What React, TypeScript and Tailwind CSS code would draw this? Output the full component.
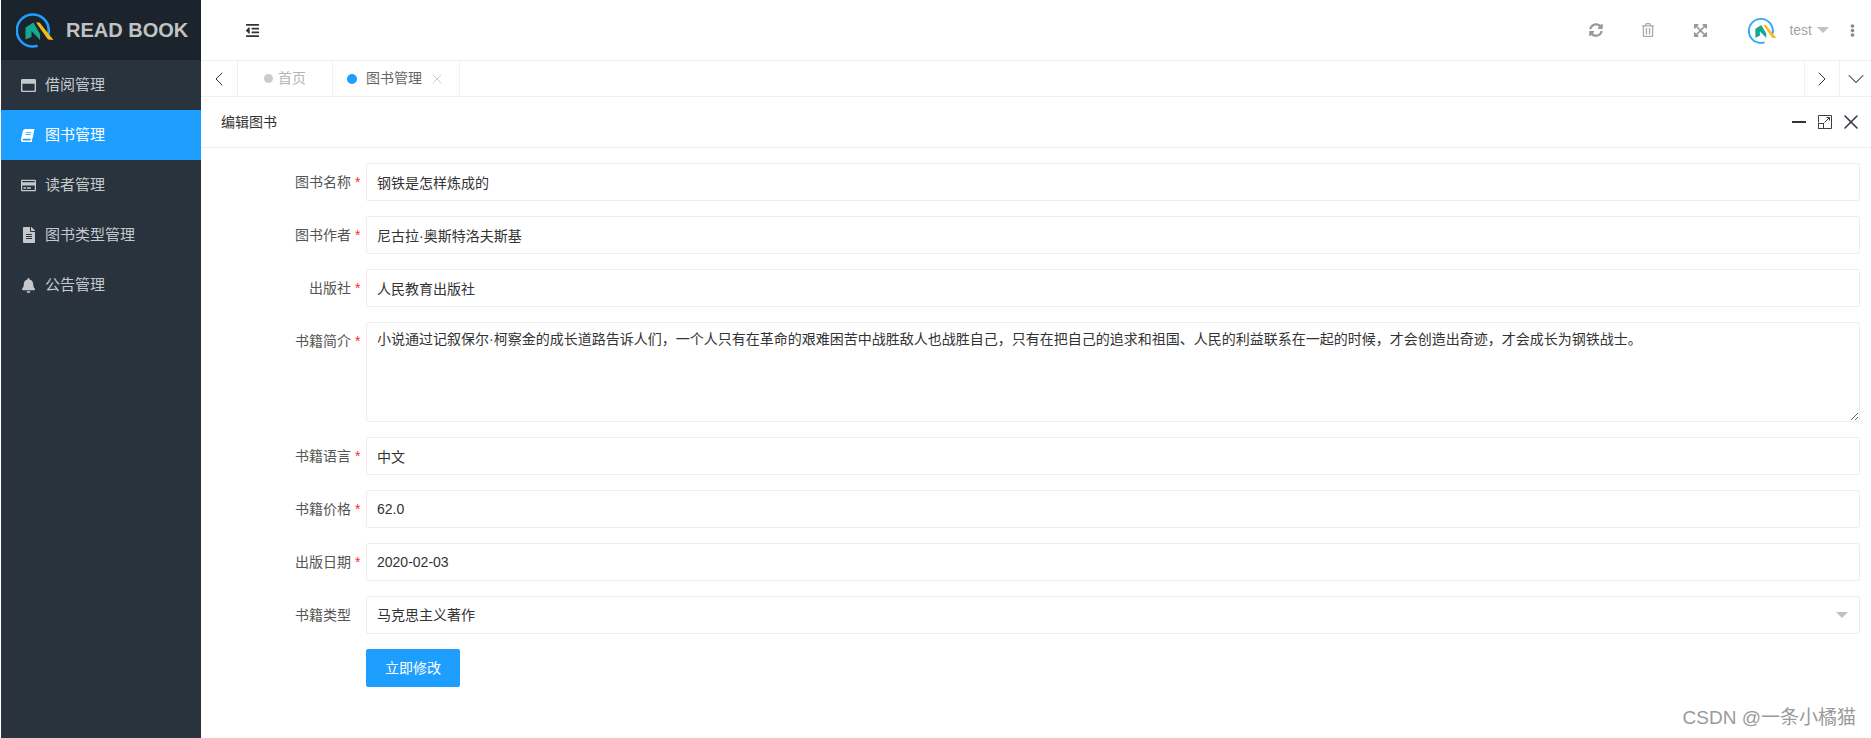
import { FaBell, FaBook, FaEllipsisV, FaExpandArrowsAlt, FaFileAlt, FaOutdent, FaRegCreditCard, FaRegTrashAlt, FaRegWindowMaximize, FaSyncAlt } from "react-icons/fa"
import { ChevronDown, ChevronLeft, ChevronRight, X } from "lucide-react"
import type { ReactNode } from "react"

const cjk = "font-['Liberation_Sans','Noto_Sans_CJK_SC',sans-serif]"

const menuItems = [
  { label: "借阅管理", icon: <FaRegWindowMaximize size={15} /> },
  { label: "图书管理", icon: <FaBook size={13} className="-skew-x-12" />, active: true },
  { label: "读者管理", icon: <FaRegCreditCard size={15} /> },
  { label: "图书类型管理", icon: <FaFileAlt size={16} /> },
  { label: "公告管理", icon: <FaBell size={15} /> },
]

const Logo = ({ className, dark }: { className: string; dark?: boolean }) => (
  <svg viewBox="0 0 38 36" className={className}>
    <circle cx="16.800" cy="18.500" r="16" fill="none" stroke={dark ? "#1e9fff" : "#2ea6ff"} strokeWidth="2.6" strokeDasharray="84.500 16" strokeDashoffset="80.500" />
    <path d="M9.500 27.500V15.500l8-5 6.500 11.500v6l-8.500-9v6z" fill="#14a98f" />
    <path d="M20 10.500h3.500L37.500 28 32 27.500z" fill="#f5b91c" />
  </svg>
)

const Sidebar = () => (
  <aside className="flex w-[200px] shrink-0 flex-col bg-[#28333e]">
    <div className="flex h-[60px] items-center bg-[#1b232c] pl-[15px]">
      <Logo dark className="h-[36px] w-[38px]" />
      <span className="ml-[12px] text-[20px] font-bold text-[#c2c2c2]">READ BOOK</span>
    </div>
    {menuItems.map((item) => (
      <div
        key={item.label}
        className={`flex h-[50px] items-center pl-[20px] text-[15px] ${item.active ? "bg-[#1e9fff] text-white" : "text-[#c5c9cc]"}`}
      >
        <span className="flex w-[24px] justify-start">{item.icon}</span>
        {item.label}
      </div>
    ))}
  </aside>
)

const TopBar = () => (
  <header className="flex h-[60px] items-center bg-white text-[#999]">
    <FaOutdent size={15} className="ml-[44px] text-[#333]" />
    <div className="flex-1" />
    <div className="flex items-center">
      <span className="flex w-[52px] justify-center"><FaSyncAlt size={14} /></span>
      <span className="flex w-[52px] justify-center"><FaRegTrashAlt size={14} className="text-[#aaa]" /></span>
      <span className="flex w-[52px] justify-center"><FaExpandArrowsAlt size={15} /></span>
      <Logo className="ml-[22px] h-[27px] w-[29px]" />
      <span className="ml-[12px] text-[14px] text-[#a5a5a5]">test</span>
      <span className="ml-[5px] h-0 w-0 border-x-[6px] border-t-[6px] border-x-transparent border-t-[#c2c2c2]" />
      <FaEllipsisV size={13} className="ml-[17px] mr-[12px] text-[#888]" />
    </div>
  </header>
)

const TabBar = () => (
  <div className="flex h-[37px] items-stretch border-y border-[#f0f0f0] bg-white text-[14px]">
    <div className="flex w-[37px] items-center justify-center border-r border-[#f0f0f0]">
      <ChevronLeft size={24} strokeWidth={1} className="text-[#333]" />
    </div>
    <div className="flex w-[95px] items-center border-r border-[#f0f0f0] pl-[26px] text-[#b5b5b5]">
      <span className="mr-[5px] size-[9px] rounded-full bg-[#ccc]" />
      首页
    </div>
    <div className="flex w-[127px] items-center border-r border-[#f0f0f0] pl-[14px] text-[#666]">
      <span className="mr-[9px] size-[10px] rounded-full bg-[#1e9fff]" />
      图书管理
      <X size={16} strokeWidth={1.5} className="ml-[7px] text-[#ccc]" />
    </div>
    <div className="flex-1" />
    <div className="flex w-[35px] items-center justify-center border-l border-[#f0f0f0]">
      <ChevronRight size={24} strokeWidth={1} className="text-[#333]" />
    </div>
    <div className="flex w-[32px] items-center justify-center border-l border-[#f0f0f0]">
      <ChevronDown size={28} strokeWidth={0.9} className="text-[#333]" />
    </div>
  </div>
)

const CardHeader = () => (
  <div className="flex h-[51px] shrink-0 items-center border-b border-[#eee] pl-[20px] pr-[8px] text-[14px] text-[#333]">
    <span className="flex-1">编辑图书</span>
    <span className="h-[2px] w-[14px] bg-[#2f3440]" />
    <svg viewBox="0 0 14 14" className="ml-[12px] size-[14px]" fill="none" stroke="#3a3f4a" strokeWidth="1">
      <path d="M.5 7.500V.5h13v13H5M8.500 2.500h3v3M11.500 2.500L6.500 7.500" />
      <rect x=".5" y="8.500" width="5" height="5" />
    </svg>
    <X size={24} strokeWidth={1.5} className="ml-[7px] text-[#2f3440]" />
  </div>
)

const FormRow = ({ label, required, children }: { label: string; required?: boolean; children: ReactNode }) => (
  <div className="flex">
    <label className="relative h-[38px] w-[150px] text-right text-[14px] leading-[38px] text-[#555]">
      {label}
      {required && <span className="absolute left-[154px] top-0 text-[14px] text-[#ff2a2a]">*</span>}
    </label>
    <div className="ml-[15px] flex-1">{children}</div>
  </div>
)

const inputClass =
  "block h-[38px] w-full rounded-[2px] border border-[#eee] bg-white px-[10px] text-[14px] text-[#333] outline-none"

const TextField = ({ value }: { value: string }) => <input readOnly value={value} className={inputClass} />

const EditForm = () => (
  <form className="flex flex-col gap-[15px] pr-[11px] pt-[15px]">
    <FormRow label="图书名称" required><TextField value="钢铁是怎样炼成的" /></FormRow>
    <FormRow label="图书作者" required><TextField value="尼古拉·奥斯特洛夫斯基" /></FormRow>
    <FormRow label="出版社" required><TextField value="人民教育出版社" /></FormRow>
    <FormRow label="书籍简介" required>
      <textarea
        readOnly
        value="小说通过记叙保尔·柯察金的成长道路告诉人们，一个人只有在革命的艰难困苦中战胜敌人也战胜自己，只有在把自己的追求和祖国、人民的利益联系在一起的时候，才会创造出奇迹，才会成长为钢铁战士。"
        className="block h-[100px] w-full rounded-[2px] border border-[#eee] bg-white px-[10px] py-[6px] text-[14px] leading-[20px] text-[#333] outline-none"
      />
    </FormRow>
    <FormRow label="书籍语言" required><TextField value="中文" /></FormRow>
    <FormRow label="书籍价格" required><TextField value="62.0" /></FormRow>
    <FormRow label="出版日期" required><TextField value="2020-02-03" /></FormRow>
    <FormRow label="书籍类型">
      <div className={`${inputClass} flex items-center justify-between`}>
        马克思主义著作
        <span className="mr-[1px] h-0 w-0 border-x-[6px] border-t-[6px] border-x-transparent border-t-[#c2c2c2]" />
      </div>
    </FormRow>
    <div className="pl-[165px]">
      <button type="button" className="h-[38px] w-[94px] rounded-[2px] bg-[#1e9fff] text-[14px] text-white">
        立即修改
      </button>
    </div>
  </form>
)

export default function App() {
  return (
    <div className={`relative flex h-[738px] w-[1871px] overflow-hidden bg-white pl-px ${cjk}`}>
      <Sidebar />
      <main className="flex min-w-0 flex-1 flex-col">
        <TopBar />
        <TabBar />
        <CardHeader />
        <EditForm />
      </main>
      <span className="absolute bottom-[6px] right-[15px] text-[19px] text-[#9a9a9a]">CSDN @一条小橘猫</span>
    </div>
  )
}
